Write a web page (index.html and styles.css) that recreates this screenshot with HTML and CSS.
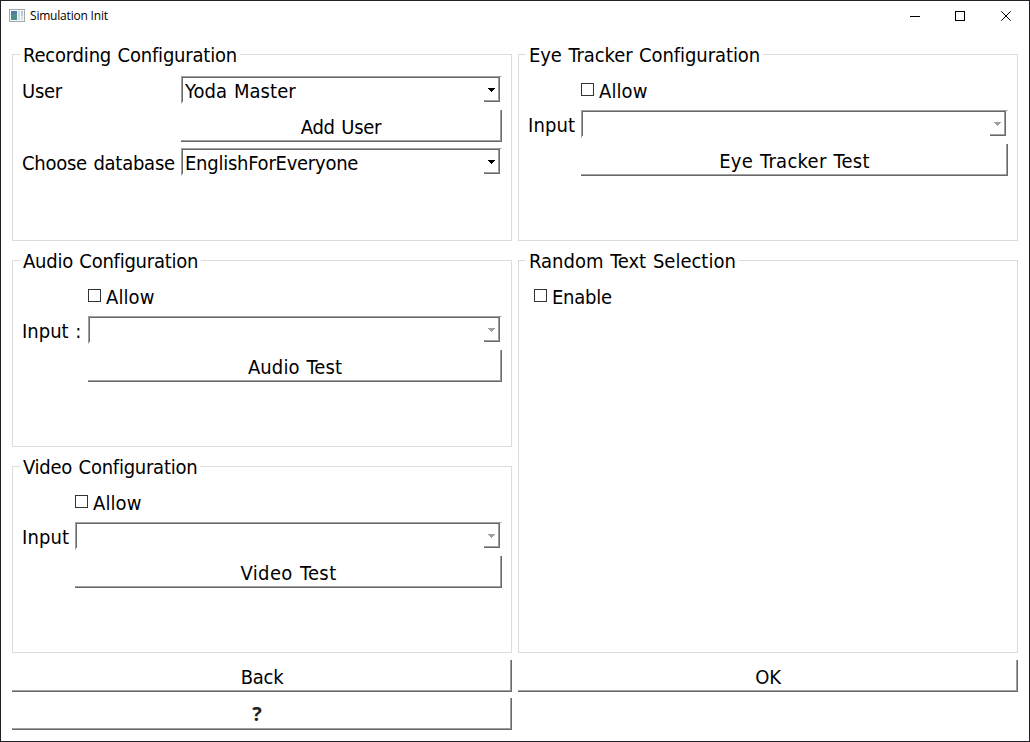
FILE: index.html
```html
<!DOCTYPE html>
<html lang="en">
<head>
<meta charset="utf-8">
<title>Simulation Init</title>
<link rel="stylesheet" href="styles.css">
</head>
<body>
<div class="window">
  <header class="titlebar">
    <svg class="app-icon" width="16" height="14" viewBox="0 0 16 14" shape-rendering="crispEdges">
      <rect x="0.5" y="0.5" width="15" height="12" fill="#f4f5f7" stroke="#a3a8ae"/>
      <rect x="2" y="2" width="6" height="9" fill="#4d8f86"/>
      <rect x="2" y="2" width="6" height="3" fill="#5479a5"/>
      <rect x="9" y="2" width="2" height="9" fill="#d5dbe2"/>
      <rect x="12" y="2" width="2" height="5" fill="#b5cfd8"/>
      <rect x="12" y="7" width="2" height="4" fill="#d6e5d9"/>
    </svg>
    <span class="title">Simulation Init</span>
    <svg class="controls" width="101" height="10" viewBox="0 0 101 10">
      <path d="M0 5.5H10M45.5 .5H54.5V9.5H45.5Z" fill="none" stroke="#000" shape-rendering="crispEdges"/>
      <path d="M91.3 .3L100.7 9.7M100.7 .3L91.3 9.7" fill="none" stroke="#000"/>
    </svg>
  </header>
  <main class="content">
    <div class="columns">
      <div class="column">
        <section class="group recording">
          <h2 class="legend">Recording Configuration</h2>
          <label class="label">User</label>
          <div class="combo"><span class="value user">Yoda Master</span><span class="drop"><svg width="7" height="4"><path d="M0 0H7V1H6V2H5V3H4V4H3V3H2V2H1V1H0Z"/></svg></span></div>
          <button class="button field">Add User</button>
          <label class="label">Choose database</label>
          <div class="combo"><span class="value">EnglishForEveryone</span><span class="drop"><svg width="7" height="4"><path d="M0 0H7V1H6V2H5V3H4V4H3V3H2V2H1V1H0Z"/></svg></span></div>
        </section>
        <section class="group audio">
          <h2 class="legend">Audio Configuration</h2>
          <label class="check allow field"><span class="box"></span><span class="caption">Allow</span></label>
          <label class="label">Input :</label>
          <div class="combo disabled"><span class="value"></span><span class="drop"><svg width="7" height="4"><path d="M0 0H7V1H6V2H5V3H4V4H3V3H2V2H1V1H0Z"/></svg></span></div>
          <button class="button field">Audio Test</button>
        </section>
        <section class="group video">
          <h2 class="legend">Video Configuration</h2>
          <label class="check allow field"><span class="box"></span><span class="caption">Allow</span></label>
          <label class="label">Input</label>
          <div class="combo disabled"><span class="value"></span><span class="drop"><svg width="7" height="4"><path d="M0 0H7V1H6V2H5V3H4V4H3V3H2V2H1V1H0Z"/></svg></span></div>
          <button class="button field">Video Test</button>
        </section>
      </div>
      <div class="column">
        <section class="group eye">
          <h2 class="legend">Eye Tracker Configuration</h2>
          <label class="check allow field"><span class="box"></span><span class="caption">Allow</span></label>
          <label class="label">Input</label>
          <div class="combo disabled"><span class="value"></span><span class="drop"><svg width="7" height="4"><path d="M0 0H7V1H6V2H5V3H4V4H3V3H2V2H1V1H0Z"/></svg></span></div>
          <button class="button field">Eye Tracker Test</button>
        </section>
        <section class="group random">
          <h2 class="legend">Random Text Selection</h2>
          <label class="check"><span class="box"></span><span class="caption">Enable</span></label>
        </section>
      </div>
    </div>
    <footer class="actions">
      <button class="button">Back</button>
      <button class="button">OK</button>
      <button class="button help">?</button>
    </footer>
  </main>
</div>
</body>
</html>
```

FILE: styles.css
```css
* { box-sizing: border-box; }
body {
  margin: 0;
  background: #fff;
  color: #000;
  font: 20px/28px "DejaVu Sans Condensed", "DejaVu Sans", sans-serif;
  font-stretch: condensed;
  letter-spacing: -0.25px;
  word-spacing: 1px;
}
.window {
  width: 1030px;
  height: 742px;
  border: 1px solid #222024;
  overflow: hidden;
}
.titlebar {
  height: 29px;
  padding: 0 18px 0 8px;
  display: flex;
  align-items: center;
}
.title {
  flex: 1;
  margin-left: 5px;
  font: 12px/29px "Open Sans", "Noto Sans", sans-serif;
  letter-spacing: -0.2px;
  word-spacing: 0;
}
.content { padding: 24px 11px 0; }
.columns { display: flex; gap: 6px; }
.column {
  width: 500px;
  display: flex;
  flex-direction: column;
  gap: 19px;
}
.group {
  position: relative;
  height: 187px;
  padding: 21px 9px 0;
  border: 1px solid #dcdcdc;
  display: grid;
  grid-auto-rows: max-content;
  gap: 6px;
}
.recording { grid-template-columns: 153px 1fr; }
.audio { grid-template-columns: 60px 1fr; }
.video, .eye { grid-template-columns: 47px 1fr; }
.random { height: 393px; padding-left: 15px; }
.legend {
  position: absolute;
  left: 7px;
  top: -14px;
  margin: 0;
  padding: 0 3px;
  background: #fff;
  font-size: 20px;
  font-weight: normal;
  white-space: nowrap;
}
.recording .legend { letter-spacing: -0.2px; }
.eye .legend { letter-spacing: -0.08px; }
.random .legend { letter-spacing: 0; }
.field { grid-column: 2; }
.label { height: 28px; padding-top: 1px; white-space: nowrap; }
.audio .label { letter-spacing: 0; }
.video .label, .eye .label, .allow { letter-spacing: 0.1px; }
.combo {
  height: 28px;
  display: flex;
  justify-content: space-between;
  border: 1px solid #fff;
  border-top-color: #a0a0a0;
  border-left-color: #a0a0a0;
  box-shadow: inset -1px -1px #fff, inset 1px 1px #696969;
  padding: 1px 1px 1px 1px;
}
.value { padding-left: 2px; line-height: 26px; white-space: nowrap; }
.user { letter-spacing: 0.08px; }
.drop {
  width: 16px;
  height: 24px;
  padding: 10px 0 0 4px;
  box-shadow: inset -1px -1px #696969, inset -2px -2px #a0a0a0;
}
.drop svg { display: block; shape-rendering: crispEdges; }
.disabled path { fill: #a0a0a0; }
.button {
  height: 32px;
  padding: 2px 0 0;
  border: 0;
  background: #fff;
  color: #000;
  font: inherit;
  letter-spacing: inherit;
  word-spacing: inherit;
  box-shadow: inset -1px -1px #696969, inset -2px -2px #a0a0a0;
}
.recording .button { padding-right: 1px; }
.audio .button { letter-spacing: 0.12px; }
.video .button { letter-spacing: 0.4px; }
.eye .button { letter-spacing: 0.28px; }
.check { height: 28px; display: flex; align-items: flex-start; gap: 5px; }
.box { width: 13px; height: 13px; margin-top: 7px; border: 1px solid #333; }
.caption { padding-top: 1px; line-height: 28px; }
.actions {
  margin-top: 7px;
  display: grid;
  grid-template-columns: 500px 500px;
  gap: 6px;
}
.help {
  padding: 0 10px 0 0;
  color: #222;
  font: bold 20px/28px "Open Sans", "Noto Sans", sans-serif;
}
```
